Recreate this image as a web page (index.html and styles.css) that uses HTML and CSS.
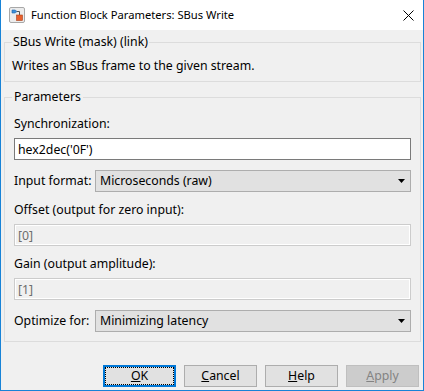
FILE: index.html
```html
<!DOCTYPE html>
<html lang="en">
<head>
    <meta charset="UTF-8">
    <title>Function Block Parameters: SBus Write</title>
    <link rel="stylesheet" href="styles.css">
</head>
<body>
    <div class="window">
        <div class="titlebar">
            <svg class="app-icon" width="16" height="16" viewBox="0 0 16 16">
                <rect x="0.5" y="0.5" width="15" height="15" rx="1.5" fill="#ececec" stroke="#a8a8a8"/>
                <path d="M3 3 H6 L8 4.5 L6 6 H3 Z" fill="#3d8fd8" stroke="#1f64a8" stroke-width="0.6"/>
                <path d="M8 4.5 H10.5 V8" fill="none" stroke="#555" stroke-width="1"/>
                <rect x="7.5" y="8" width="6" height="5.5" fill="#e8602c" stroke="#a8401a" stroke-width="0.6"/>
            </svg>
            <span class="title">Function Block Parameters: SBus Write</span>
            <svg class="close" width="11" height="11" viewBox="0 0 11 11">
                <path d="M0.5 0.5 L10.5 10.5 M10.5 0.5 L0.5 10.5" stroke="#000" stroke-width="1"/>
            </svg>
        </div>

        <div class="content">
            <fieldset class="group mask">
                <legend>SBus Write (mask) (link)</legend>
                <p class="desc">Writes an SBus frame to the given stream.</p>
            </fieldset>

            <fieldset class="group params">
                <legend>Parameters</legend>

                <label class="field-label" for="sync">Synchronization:</label>
                <input class="text-input" type="text" id="sync" value="hex2dec('0F')">

                <div class="row">
                    <span class="row-label">Input format:</span>
                    <div class="dropdown">
                        <span>Microseconds (raw)</span>
                        <svg class="caret" width="7" height="4" viewBox="0 0 7 4"><path d="M0 0 H7 L3.5 4 Z" fill="#000"/></svg>
                    </div>
                </div>

                <label class="field-label" for="offset">Offset (output for zero input):</label>
                <input class="text-input" type="text" id="offset" value="[0]" disabled>

                <label class="field-label" for="gain">Gain (output amplitude):</label>
                <input class="text-input" type="text" id="gain" value="[1]" disabled>

                <div class="row">
                    <span class="row-label">Optimize for:</span>
                    <div class="dropdown">
                        <span>Minimizing latency</span>
                        <svg class="caret" width="7" height="4" viewBox="0 0 7 4"><path d="M0 0 H7 L3.5 4 Z" fill="#000"/></svg>
                    </div>
                </div>
            </fieldset>

            <div class="buttons">
                <button type="button" class="btn default"><u>O</u>K</button>
                <button type="button" class="btn"><u>C</u>ancel</button>
                <button type="button" class="btn"><u>H</u>elp</button>
                <button type="button" class="btn" disabled><u>A</u>pply</button>
            </div>
        </div>
    </div>
</body>
</html>
```

FILE: styles.css
```css
body {
    margin: 0;
    font-family: "Noto Sans", "Open Sans", sans-serif;
    font-size: 12.3px;
    line-height: 16px;
    color: #000;
}
.window {
    width: 424px;
    height: 391px;
    box-sizing: border-box;
    border: 1px solid #1883d7;
    border-top: none;
    background: #f0f0f0;
    overflow: hidden;
}
.titlebar {
    height: 30px;
    background: #fff;
    display: flex;
    align-items: center;
    padding-left: 8px;
}
.app-icon {
    margin-right: 6px;
}
.title {
    flex: 1;
    font-size: 11.2px;
}
.close {
    margin-right: 9px;
}
.content {
    padding: 0 2px 0 3px;
}
.group {
    margin: 0;
    border: 1px solid #dcdcdc;
    min-width: 0;
}
.group legend {
    padding: 0 1px;
    line-height: 16px;
}
.mask {
    margin-top: 4px;
    padding: 8px 7px 7px 7px;
}
.desc {
    margin: 0;
}
.params {
    margin-top: 7px;
    padding: 11px 9px 9px 9px;
}
.params legend {
    margin-left: -2px;
    padding: 0 2px;
}
.field-label {
    display: block;
    height: 16px;
    margin-bottom: 6px;
}
.text-input {
    display: block;
    box-sizing: border-box;
    width: 100%;
    height: 22px;
    margin: 0 0 10px 0;
    padding: 0 3px;
    border: 1px solid #7a7a7a;
    background: #fff;
    font: inherit;
    color: #000;
    outline: none;
}
.text-input:disabled {
    border-color: #cccccc;
    background: #f0f0f0;
    box-shadow: inset 0 0 0 1px #fff;
    color: #6d6d6d;
}
.row {
    display: flex;
    align-items: center;
    height: 22px;
    margin-bottom: 10px;
}
.params .row:last-child {
    margin-bottom: 0;
}
.row-label {
    width: 81px;
    flex: none;
}
.dropdown {
    flex: 1;
    height: 22px;
    box-sizing: border-box;
    display: flex;
    align-items: center;
    justify-content: space-between;
    padding: 0 5px 0 4px;
    background: #e1e1e1;
    border: 1px solid #adadad;
}
.buttons {
    display: flex;
    justify-content: flex-end;
    gap: 8px;
    margin: 23px 2px 0 0;
}
.btn {
    width: 73px;
    height: 22px;
    box-sizing: border-box;
    padding: 0;
    font: inherit;
    color: #000;
    background: #e1e1e1;
    border: 1px solid #adadad;
}
.btn.default {
    border-color: #0078d7;
    outline: 1px dotted #000;
    outline-offset: -3px;
    box-shadow: inset 0 0 0 1px #0078d7;
}
.btn:disabled {
    background: #cccccc;
    border-color: #bfbfbf;
    color: #838383;
}
```
